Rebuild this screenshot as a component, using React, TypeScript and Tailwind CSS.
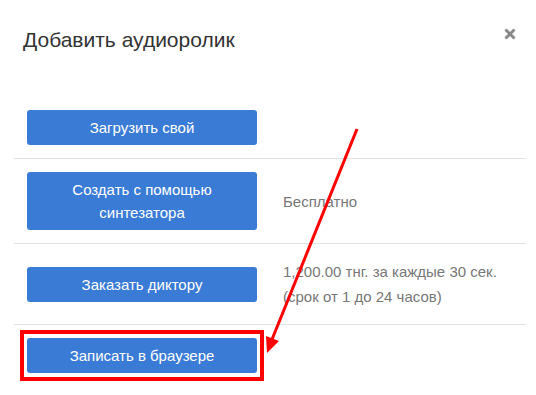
import React, { FC } from "react";

type Row = {
  label: string[];
  note?: string[];
  h: string;
};

const rows: Row[] = [
  { label: ["Загрузить свой"], h: "h-[62px]" },
  { label: ["Создать с помощью", "синтезатора"], note: ["Бесплатно"], h: "h-[85px]" },
  { label: ["Заказать диктору"], note: ["1,200.00 тнг. за каждые 30 сек.", "(срок от 1 до 24 часов)"], h: "h-[81px]" },
  { label: ["Записать в браузере"], h: "h-[62px]" },
];

const App: FC = () => {
  return (
    <div className="relative w-[536px] h-[395px] bg-white overflow-hidden font-['Liberation_Sans',Arial,sans-serif]">
      <header className="flex items-start justify-between pl-[23px] pr-[20px] pt-[28px]">
        <h2 className="text-[21px] leading-[24px] text-[#333]">Добавить аудиоролик</h2>
        <button className="w-[12px] h-[12px] text-[#888]">
          <svg viewBox="0 0 12 12" className="w-[12px] h-[12px]">
            <path d="M1.5 1.5 L10.5 10.5 M10.5 1.5 L1.5 10.5" stroke="currentColor" strokeWidth="3" />
          </svg>
        </button>
      </header>

      <div className="mt-[44px] ml-[14px] w-[512px] flex flex-col">
        {rows.map((row, i) => (
          <div
            key={i}
            className={`flex items-center gap-[26px] pl-[13px] ${row.h} ${i > 0 ? "border-t border-[#e3e3e3]" : ""}`}
          >
            <div className="w-[230px] shrink-0 rounded-[3px] bg-[#3a7bd5] text-white text-[15px] leading-[23px] text-center px-3 py-[6px]">
              {row.label.map((l) => (
                <div key={l}>{l}</div>
              ))}
            </div>
            {row.note && (
              <div className="text-[15px] leading-[25px] text-[#777]">
                {row.note.map((n) => (
                  <div key={n}>{n}</div>
                ))}
              </div>
            )}
          </div>
        ))}
      </div>

      {/* annotation overlay */}
      <div className="absolute left-[20px] top-[330px] w-[244px] h-[51px] border-[4px] border-[#f00]" />
      <svg className="absolute left-0 top-0 pointer-events-none" width="536" height="395">
        <line x1="357" y1="129" x2="271" y2="342" stroke="#f00" strokeWidth="3" />
        <polygon points="267,353 266,336 279,341" fill="#f00" />
      </svg>
    </div>
  );
};

export default App;
